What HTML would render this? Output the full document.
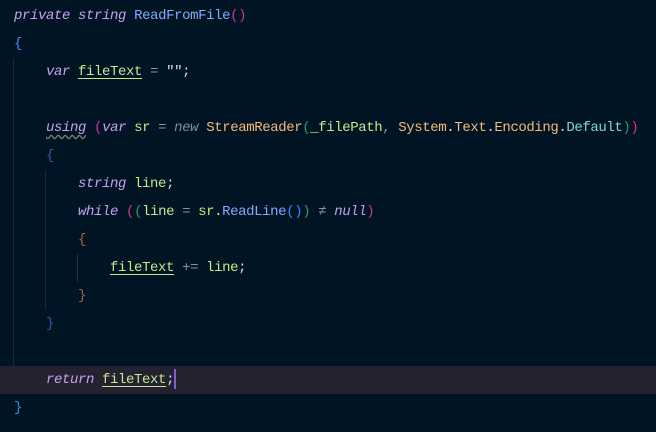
<!DOCTYPE html><html><head><style>
body{margin:0;background:#011423;width:656px;height:432px;overflow:hidden;position:relative;font-family:"Liberation Mono",monospace;font-size:14px;letter-spacing:-0.4px;}
.l{position:absolute;left:14px;height:28px;line-height:28px;white-space:pre;color:#d6deeb}
.k{color:#c5a0f0;font-style:italic}
.m{color:#82aaff}
.p{color:#d6338a}
.g{color:#2e9e5a}
.v{color:#c3e88d}
.u{text-decoration:underline;text-underline-offset:3px}
.o{color:#f5b97a}
.t{color:#7fdbca}
.n{color:#7f8c98;font-style:italic}
.b{color:#3a8fef}
.br{color:#a0654a}
.db{color:#3355b5}
.gr{color:#8a94a0}
.guide{position:absolute;width:1px;background:#1a2a3d}
</style></head><body>
<div style="position:absolute;left:0;top:366px;width:656px;height:28px;background:#242231"></div>
<div class="guide" style="left:13px;top:58px;height:308px"></div>
<div class="guide" style="left:45px;top:170px;height:140px"></div>
<div class="guide" style="left:77px;top:254px;height:28px;background:#2a3038"></div>
<div class="l" style="top:2px"><span class="k">private</span> <span class="k">string</span> <span class="m">ReadFromFile</span><span class="p">()</span></div>
<div class="l" style="top:30px"><span class="b">{</span></div>
<div class="l" style="top:58px">    <span class="k">var</span> <span class="v u">fileText</span> <span class="gr">=</span> "";</div>
<div class="l" style="top:114px">    <span class="k" style="text-decoration:underline wavy #777;text-underline-offset:3px">using</span> <span class="p">(</span><span class="k">var</span> <span class="v">sr</span> <span class="gr">=</span> <span class="n">new</span> <span class="o">StreamReader</span><span class="g">(</span><span class="v">_filePath</span><span class="gr">,</span> <span class="o">System</span>.<span class="o">Text</span>.<span class="o">Encoding</span>.<span class="t">Default</span><span class="g">)</span><span class="p">)</span></div>
<div class="l" style="top:142px">    <span class="db">{</span></div>
<div class="l" style="top:170px">        <span class="k">string</span> <span class="v">line</span>;</div>
<div class="l" style="top:198px">        <span class="k">while</span> <span class="p">(</span><span class="g">(</span><span class="v">line</span> <span class="gr">=</span> <span class="v">sr</span>.<span class="m">ReadLine</span><span class="b">()</span><span class="g">)</span> <span class="gr">≠</span> <span class="k">null</span><span class="p">)</span></div>
<div class="l" style="top:226px">        <span class="br">{</span></div>
<div class="l" style="top:254px">            <span class="v u">fileText</span> <span class="gr">+=</span> <span class="v">line</span>;</div>
<div class="l" style="top:282px">        <span class="br">}</span></div>
<div class="l" style="top:310px">    <span class="db">}</span></div>
<div class="l" style="top:366px">    <span class="k">return</span> <span class="v u">fileText</span>;<span style="display:inline-block;width:2px;height:20px;background:#8a5cd0;vertical-align:middle"></span></div>
<div class="l" style="top:394px"><span class="b">}</span></div>
</body></html>
